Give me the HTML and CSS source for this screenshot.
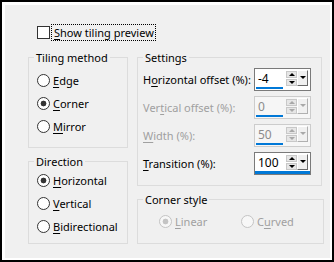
FILE: index.html
```html
<!DOCTYPE html>
<html lang="en">
<head>
    <meta charset="UTF-8">
    <title>Tiling</title>
    <link rel="stylesheet" href="styles.css">
</head>
<body>
    <div class="frame">
        <div class="dialog">
            <!-- Preview checkbox -->
            <div class="check-row">
                <span class="checkbox"></span>
                <span class="focus-label"><u>S</u>how tiling preview</span>
            </div>

            <div class="groups">
                <!-- Left column -->
                <div class="col-left">
                    <fieldset class="group group-method">
                        <legend>Tiling method</legend>
                        <div class="radio-row"><span class="radio"></span><span><u>E</u>dge</span></div>
                        <div class="radio-row"><span class="radio checked"></span><span><u>C</u>orner</span></div>
                        <div class="radio-row"><span class="radio"></span><span><u>M</u>irror</span></div>
                    </fieldset>

                    <fieldset class="group group-direction">
                        <legend>Direction</legend>
                        <div class="radio-row"><span class="radio checked"></span><span><u>H</u>orizontal</span></div>
                        <div class="radio-row"><span class="radio"></span><span><u>V</u>ertical</span></div>
                        <div class="radio-row"><span class="radio"></span><span><u>B</u>idirectional</span></div>
                    </fieldset>
                </div>

                <!-- Right column -->
                <div class="col-right">
                    <fieldset class="group group-settings">
                        <legend>Settings</legend>
                        <div class="field-row">
                            <span>H<u>o</u>rizontal offset (%):</span>
                            <div class="spin">
                                <div class="num">-4</div>
                                <div class="updown"><span class="btn"><i class="up"></i></span><span class="btn"><i class="down"></i></span></div>
                                <div class="drop"><i class="down"></i></div>
                            </div>
                        </div>
                        <div class="field-row disabled">
                            <span>Ver<u>t</u>ical offset (%):</span>
                            <div class="spin">
                                <div class="num">0</div>
                                <div class="updown"><span class="btn"><i class="up"></i></span><span class="btn"><i class="down"></i></span></div>
                                <div class="drop"><i class="down"></i></div>
                            </div>
                        </div>
                        <div class="field-row disabled">
                            <span><u>W</u>idth (%):</span>
                            <div class="spin">
                                <div class="num">50</div>
                                <div class="updown"><span class="btn"><i class="up"></i></span><span class="btn"><i class="down"></i></span></div>
                                <div class="drop"><i class="down"></i></div>
                            </div>
                        </div>
                        <div class="field-row">
                            <span><u>T</u>ransition (%):</span>
                            <div class="spin spin-wide">
                                <div class="num">100</div>
                                <div class="updown"><span class="btn"><i class="up"></i></span><span class="btn"><i class="down"></i></span></div>
                                <div class="drop"><i class="down"></i></div>
                            </div>
                        </div>
                    </fieldset>

                    <fieldset class="group group-corner">
                        <legend>Corner style</legend>
                        <div class="corner-options">
                            <div class="radio-row disabled"><span class="radio checked"></span><span><u>L</u>inear</span></div>
                            <div class="radio-row disabled"><span class="radio"></span><span>C<u>u</u>rved</span></div>
                        </div>
                    </fieldset>
                </div>
            </div>
        </div>
    </div>
</body>
</html>
```

FILE: styles.css
```css
/* Reset */
* {
    margin: 0;
    padding: 0;
    box-sizing: border-box;
}

body {
    background: #000;
    font-family: 'Noto Sans', sans-serif;
    font-size: 11px;
    color: #000;
}

u {
    text-decoration: underline;
    text-underline-offset: 2px;
}

/* Window frame */
.frame {
    width: 334px;
    height: 262px;
    border: 2px solid #000;
}

.dialog {
    height: 100%;
    background: #f0f0f0;
    border-top: 3px solid #fff;
    border-left: 3px solid #fff;
    border-right: 2px solid #fff;
    border-bottom: 2px solid #fff;
    padding: 19px 0 0 23px;
}

/* Checkbox row */
.check-row {
    display: flex;
    align-items: center;
    margin-left: 9px;
    height: 16px;
}

.checkbox {
    width: 13px;
    height: 13px;
    border: 1px solid #333;
    background: #fff;
}

.focus-label {
    margin-left: 2px;
    padding: 0 1px 0 2px;
    line-height: 15px;
    outline: 1px dotted #000;
}

/* Group boxes */
.groups {
    display: flex;
    gap: 9px;
    margin-top: 10px;
}

.col-left {
    width: 100px;
    display: flex;
    flex-direction: column;
    gap: 6px;
}

.col-right {
    width: 185px;
    display: flex;
    flex-direction: column;
    gap: 6px;
}

.group {
    border: 1px solid #dcdcdc;
    padding: 0 0 0 5px;
}

.group legend {
    padding: 0 2px;
    line-height: 15px;
}

.group-method {
    padding-top: 4px;
    padding-bottom: 9px;
}

.group-direction {
    padding-bottom: 5px;
}

.group-method .radio-row,
.group-direction .radio-row {
    margin-left: 3px;
}

.group-settings {
    padding-bottom: 8px;
}

.group-corner {
    padding-top: 3px;
    padding-bottom: 10px;
}

/* Radios */
.radio-row {
    display: flex;
    align-items: center;
    gap: 3px;
    height: 23px;
    white-space: nowrap;
}

.radio {
    flex: none;
    width: 13px;
    height: 13px;
    border: 1px solid #333;
    border-radius: 50%;
    background: #fff;
}

.radio.checked {
    background: radial-gradient(circle, #333 0 2.6px, #fff 3.2px);
}

.radio-row.disabled {
    color: #a0a0a0;
}

.radio-row.disabled .radio {
    border-color: #c4c4c4;
    background: #f7f7f7;
}

.radio-row.disabled .radio.checked {
    background: radial-gradient(circle, #c4c4c4 0 2.6px, #f7f7f7 3.2px);
}

.corner-options {
    display: grid;
    grid-template-columns: 82px 82px;
    margin-left: 16px;
}

/* Settings rows */
.field-row {
    display: flex;
    align-items: center;
    justify-content: space-between;
    height: 28px;
    padding-right: 10px;
    white-space: nowrap;
}

.field-row.disabled {
    color: #a0a0a0;
}

.spin {
    display: flex;
    align-items: flex-start;
    width: 57px;
    height: 23px;
    padding: 1px;
    border: 1px solid #7a7a7a;
    background: #fff;
    color: #000;
}

.num {
    width: 27px;
    height: 19px;
    padding-left: 2px;
    font-size: 12px;
    line-height: 17px;
    border-bottom: 2px solid #0078d7;
}

/* Transition field: underline runs under the buttons too */
.spin-wide {
    box-shadow: inset 0 -3px 0 #0078d7;
}

.spin-wide .num {
    border-bottom: none;
}

.updown {
    display: flex;
    flex-direction: column;
    gap: 1px;
    width: 11px;
    margin: 1px 0 0 3px;
}

.updown .btn {
    display: flex;
    align-items: center;
    justify-content: center;
    height: 7px;
    background: #e6e6e6;
    border: 1px solid #c8c8c8;
}

.drop {
    display: flex;
    align-items: center;
    justify-content: center;
    width: 11px;
    height: 16px;
    background: #f0f0f0;
    border-top: 1px solid #fff;
    border-left: 1px solid #fff;
    border-right: 1px solid #696969;
    border-bottom: 1px solid #696969;
}

.up {
    border-left: 3px solid transparent;
    border-right: 3px solid transparent;
    border-bottom: 3px solid #000;
}

.down {
    border-left: 3px solid transparent;
    border-right: 3px solid transparent;
    border-top: 3px solid #000;
}

.disabled .spin {
    border-color: #cccccc;
    background: #f6f6f6;
    color: #8c8c8c;
}

.disabled .up {
    border-bottom-color: #a8a8a8;
}

.disabled .down {
    border-top-color: #a8a8a8;
}

.disabled .drop {
    border-right-color: #b0b0b0;
    border-bottom-color: #b0b0b0;
}
```
